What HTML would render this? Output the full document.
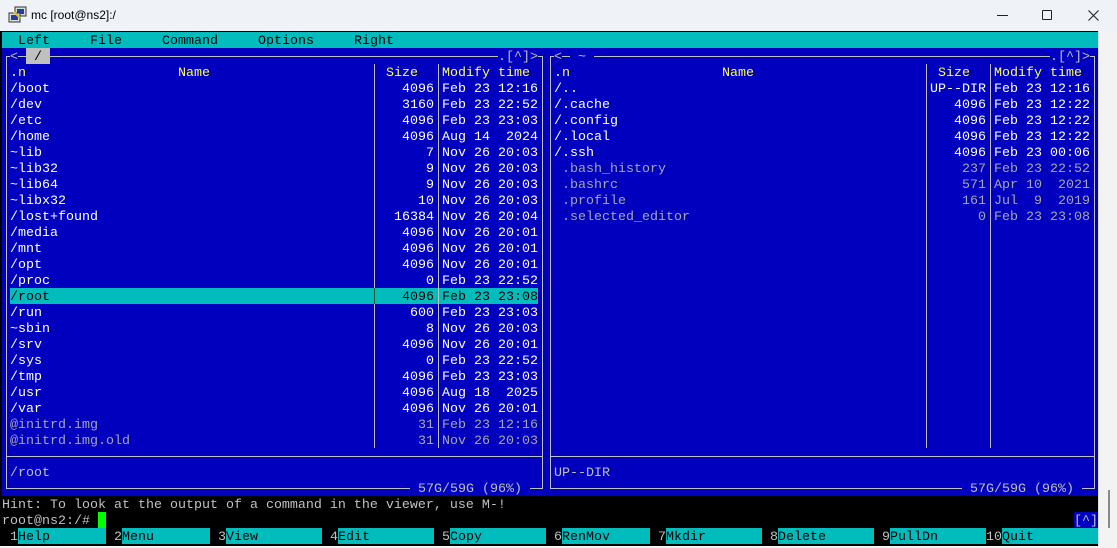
<!DOCTYPE html>
<html><head><meta charset="utf-8">
<style>
*{margin:0;padding:0;box-sizing:border-box}
html,body{width:1117px;height:546px;overflow:hidden;background:#f3f3f3}
#title{position:absolute;left:0;top:0;width:1117px;height:31px;background:#eff2f7;font-family:"Liberation Sans",sans-serif;font-size:12px;color:#000}
#term{position:absolute;left:0;top:31px;width:1098px;height:515px;background:#000}
#sb{position:absolute;left:1098px;top:31px;width:19px;height:515px;background:#f3f3f3;border-left:1px solid #e0e0e0}
.t{position:absolute;font-family:"Liberation Mono","Courier New",monospace;font-size:13.333px;line-height:20px;height:16px;white-space:pre;color:#c0c0c0}
.bg{position:absolute}
.l{position:absolute;background:#c0c0c0}
.w{color:#fff}
.g{color:#a8a8a8}
.y{color:#ffff55}
.k{color:#000}
.bb{background:#0000be}
.sz{width:56px;text-align:right}
</style></head><body>
<div id="title">
  <svg style="position:absolute;left:8px;top:6px" width="20" height="18" viewBox="0 0 20 18">
    <rect x="7" y="1" width="11" height="9" fill="#ddd" stroke="#333"/>
    <rect x="9" y="3" width="7" height="5" fill="#2040a0"/>
    <rect x="1" y="7" width="11" height="9" fill="#ddd" stroke="#333"/>
    <rect x="3" y="9" width="7" height="5" fill="#2040a0"/>
    <path d="M6 6 L12 12" stroke="#e0c000" stroke-width="2"/>
  </svg>
  <div style="position:absolute;left:31px;top:8px">mc [root@ns2]:/</div>
  <div style="position:absolute;left:997px;top:15px;width:11px;height:1px;background:#222"></div>
  <div style="position:absolute;left:1042px;top:10px;width:10px;height:10px;border:1px solid #222;border-radius:1px"></div>
  <svg style="position:absolute;left:1088px;top:10px" width="11" height="11"><path d="M0.5 0.5 L10.5 10.5 M10.5 0.5 L0.5 10.5" stroke="#222" stroke-width="1.1"/></svg>
</div>
<div id="term"></div>
<div id="sb"><div style="position:absolute;left:9px;top:459px;width:2px;height:38px;background:#8a8a8a"></div></div>

<div class="bg" style="left:2px;top:32px;width:1096px;height:16px;background:#00bcbc"></div>
<div class="t k" style="left:18px;top:32px">Left</div>
<div class="t k" style="left:90px;top:32px">File</div>
<div class="t k" style="left:162px;top:32px">Command</div>
<div class="t k" style="left:258px;top:32px">Options</div>
<div class="t k" style="left:354px;top:32px">Right</div>

<div class="bg" style="left:2px;top:48px;width:1096px;height:448px;background:#0000be"></div>
<div class="bg" style="left:10px;top:288px;width:528px;height:16px;background:#00bcbc"></div>

<div class="l" style="left:6px;top:56px;width:537px;height:1px"></div>
<div class="l" style="left:6px;top:56px;width:1px;height:433px"></div>
<div class="l" style="left:542px;top:56px;width:1px;height:433px"></div>
<div class="l" style="left:6px;top:488px;width:537px;height:1px"></div>
<div class="l" style="left:6px;top:456px;width:537px;height:1px"></div>
<div class="l" style="left:374px;top:64px;width:1px;height:384px"></div>
<div class="l" style="left:438px;top:64px;width:1px;height:384px"></div>
<div class="bg" style="left:374px;top:288px;width:1px;height:16px;background:#005a30"></div>

<div class="l" style="left:550px;top:56px;width:545px;height:1px"></div>
<div class="l" style="left:550px;top:56px;width:1px;height:433px"></div>
<div class="l" style="left:1094px;top:56px;width:1px;height:433px"></div>
<div class="l" style="left:550px;top:488px;width:545px;height:1px"></div>
<div class="l" style="left:550px;top:456px;width:545px;height:1px"></div>
<div class="l" style="left:926px;top:64px;width:1px;height:384px"></div>
<div class="l" style="left:990px;top:64px;width:1px;height:384px"></div>

<div class="t bb" style="left:10px;top:48px">&lt;</div>
<div class="t k" style="left:26px;top:48px;background:#c0c0c0"> / </div>
<div class="t bb" style="left:498px;top:48px">.[^]&gt;</div>
<div class="t bb" style="left:554px;top:48px">&lt;</div>
<div class="t bb" style="left:570px;top:48px"> ~ </div>
<div class="t bb" style="left:1050px;top:48px">.[^]&gt;</div>
<div class="t bb" style="left:410px;top:480px"> 57G/59G (96%) </div>
<div class="t bb" style="left:962px;top:480px"> 57G/59G (96%) </div>

<div class="t y" style="left:10px;top:64px">.n</div>
<div class="t y" style="left:178px;top:64px">Name</div>
<div class="t y" style="left:386px;top:64px">Size</div>
<div class="t y" style="left:442px;top:64px">Modify time</div>
<div class="t y" style="left:554px;top:64px">.n</div>
<div class="t y" style="left:722px;top:64px">Name</div>
<div class="t y" style="left:938px;top:64px">Size</div>
<div class="t y" style="left:994px;top:64px">Modify time</div>

<div class="t w" style="left:10px;top:80px">/boot</div><div class="t w sz" style="left:378px;top:80px">4096</div><div class="t w" style="left:442px;top:80px">Feb 23 12:16</div>
<div class="t w" style="left:10px;top:96px">/dev</div><div class="t w sz" style="left:378px;top:96px">3160</div><div class="t w" style="left:442px;top:96px">Feb 23 22:52</div>
<div class="t w" style="left:10px;top:112px">/etc</div><div class="t w sz" style="left:378px;top:112px">4096</div><div class="t w" style="left:442px;top:112px">Feb 23 23:03</div>
<div class="t w" style="left:10px;top:128px">/home</div><div class="t w sz" style="left:378px;top:128px">4096</div><div class="t w" style="left:442px;top:128px">Aug 14  2024</div>
<div class="t w" style="left:10px;top:144px">~lib</div><div class="t w sz" style="left:378px;top:144px">7</div><div class="t w" style="left:442px;top:144px">Nov 26 20:03</div>
<div class="t w" style="left:10px;top:160px">~lib32</div><div class="t w sz" style="left:378px;top:160px">9</div><div class="t w" style="left:442px;top:160px">Nov 26 20:03</div>
<div class="t w" style="left:10px;top:176px">~lib64</div><div class="t w sz" style="left:378px;top:176px">9</div><div class="t w" style="left:442px;top:176px">Nov 26 20:03</div>
<div class="t w" style="left:10px;top:192px">~libx32</div><div class="t w sz" style="left:378px;top:192px">10</div><div class="t w" style="left:442px;top:192px">Nov 26 20:03</div>
<div class="t w" style="left:10px;top:208px">/lost+found</div><div class="t w sz" style="left:378px;top:208px">16384</div><div class="t w" style="left:442px;top:208px">Nov 26 20:04</div>
<div class="t w" style="left:10px;top:224px">/media</div><div class="t w sz" style="left:378px;top:224px">4096</div><div class="t w" style="left:442px;top:224px">Nov 26 20:01</div>
<div class="t w" style="left:10px;top:240px">/mnt</div><div class="t w sz" style="left:378px;top:240px">4096</div><div class="t w" style="left:442px;top:240px">Nov 26 20:01</div>
<div class="t w" style="left:10px;top:256px">/opt</div><div class="t w sz" style="left:378px;top:256px">4096</div><div class="t w" style="left:442px;top:256px">Nov 26 20:01</div>
<div class="t w" style="left:10px;top:272px">/proc</div><div class="t w sz" style="left:378px;top:272px">0</div><div class="t w" style="left:442px;top:272px">Feb 23 22:52</div>
<div class="t k" style="left:10px;top:288px">/root</div><div class="t k sz" style="left:378px;top:288px">4096</div><div class="t k" style="left:442px;top:288px">Feb 23 23:08</div>
<div class="t w" style="left:10px;top:304px">/run</div><div class="t w sz" style="left:378px;top:304px">600</div><div class="t w" style="left:442px;top:304px">Feb 23 23:03</div>
<div class="t w" style="left:10px;top:320px">~sbin</div><div class="t w sz" style="left:378px;top:320px">8</div><div class="t w" style="left:442px;top:320px">Nov 26 20:03</div>
<div class="t w" style="left:10px;top:336px">/srv</div><div class="t w sz" style="left:378px;top:336px">4096</div><div class="t w" style="left:442px;top:336px">Nov 26 20:01</div>
<div class="t w" style="left:10px;top:352px">/sys</div><div class="t w sz" style="left:378px;top:352px">0</div><div class="t w" style="left:442px;top:352px">Feb 23 22:52</div>
<div class="t w" style="left:10px;top:368px">/tmp</div><div class="t w sz" style="left:378px;top:368px">4096</div><div class="t w" style="left:442px;top:368px">Feb 23 23:03</div>
<div class="t w" style="left:10px;top:384px">/usr</div><div class="t w sz" style="left:378px;top:384px">4096</div><div class="t w" style="left:442px;top:384px">Aug 18  2025</div>
<div class="t w" style="left:10px;top:400px">/var</div><div class="t w sz" style="left:378px;top:400px">4096</div><div class="t w" style="left:442px;top:400px">Nov 26 20:01</div>
<div class="t g" style="left:10px;top:416px">@initrd.img</div><div class="t g sz" style="left:378px;top:416px">31</div><div class="t g" style="left:442px;top:416px">Feb 23 12:16</div>
<div class="t g" style="left:10px;top:432px">@initrd.img.old</div><div class="t g sz" style="left:378px;top:432px">31</div><div class="t g" style="left:442px;top:432px">Nov 26 20:03</div>

<div class="t w" style="left:554px;top:80px">/..</div><div class="t w sz" style="left:930px;top:80px">UP--DIR</div><div class="t w" style="left:994px;top:80px">Feb 23 12:16</div>
<div class="t w" style="left:554px;top:96px">/.cache</div><div class="t w sz" style="left:930px;top:96px">4096</div><div class="t w" style="left:994px;top:96px">Feb 23 12:22</div>
<div class="t w" style="left:554px;top:112px">/.config</div><div class="t w sz" style="left:930px;top:112px">4096</div><div class="t w" style="left:994px;top:112px">Feb 23 12:22</div>
<div class="t w" style="left:554px;top:128px">/.local</div><div class="t w sz" style="left:930px;top:128px">4096</div><div class="t w" style="left:994px;top:128px">Feb 23 12:22</div>
<div class="t w" style="left:554px;top:144px">/.ssh</div><div class="t w sz" style="left:930px;top:144px">4096</div><div class="t w" style="left:994px;top:144px">Feb 23 00:06</div>
<div class="t g" style="left:562px;top:160px">.bash_history</div><div class="t g sz" style="left:930px;top:160px">237</div><div class="t g" style="left:994px;top:160px">Feb 23 22:52</div>
<div class="t g" style="left:562px;top:176px">.bashrc</div><div class="t g sz" style="left:930px;top:176px">571</div><div class="t g" style="left:994px;top:176px">Apr 10  2021</div>
<div class="t g" style="left:562px;top:192px">.profile</div><div class="t g sz" style="left:930px;top:192px">161</div><div class="t g" style="left:994px;top:192px">Jul  9  2019</div>
<div class="t g" style="left:562px;top:208px">.selected_editor</div><div class="t g sz" style="left:930px;top:208px">0</div><div class="t g" style="left:994px;top:208px">Feb 23 23:08</div>

<div class="t" style="left:10px;top:464px">/root</div>
<div class="t" style="left:554px;top:464px">UP--DIR</div>

<div class="t" style="left:2px;top:496px">Hint: To look at the output of a command in the viewer, use M-!</div>
<div class="t" style="left:2px;top:512px">root@ns2:/#</div>
<div class="bg" style="left:98px;top:512px;width:8px;height:16px;background:#00ff00"></div>
<div class="t" style="left:1074px;top:512px;width:24px;background:#0000be">[^]</div>

<div class="t" style="left:2px;top:528px"> 1</div><div class="t k" style="left:18px;top:528px;width:88px;background:#00bcbc">Help</div>
<div class="t" style="left:106px;top:528px"> 2</div><div class="t k" style="left:122px;top:528px;width:88px;background:#00bcbc">Menu</div>
<div class="t" style="left:210px;top:528px"> 3</div><div class="t k" style="left:226px;top:528px;width:96px;background:#00bcbc">View</div>
<div class="t" style="left:322px;top:528px"> 4</div><div class="t k" style="left:338px;top:528px;width:96px;background:#00bcbc">Edit</div>
<div class="t" style="left:434px;top:528px"> 5</div><div class="t k" style="left:450px;top:528px;width:96px;background:#00bcbc">Copy</div>
<div class="t" style="left:546px;top:528px"> 6</div><div class="t k" style="left:562px;top:528px;width:88px;background:#00bcbc">RenMov</div>
<div class="t" style="left:650px;top:528px"> 7</div><div class="t k" style="left:666px;top:528px;width:96px;background:#00bcbc">Mkdir</div>
<div class="t" style="left:762px;top:528px"> 8</div><div class="t k" style="left:778px;top:528px;width:96px;background:#00bcbc">Delete</div>
<div class="t" style="left:874px;top:528px"> 9</div><div class="t k" style="left:890px;top:528px;width:96px;background:#00bcbc">PullDn</div>
<div class="t" style="left:986px;top:528px">10</div><div class="t k" style="left:1002px;top:528px;width:96px;background:#00bcbc">Quit</div>
</body></html>
